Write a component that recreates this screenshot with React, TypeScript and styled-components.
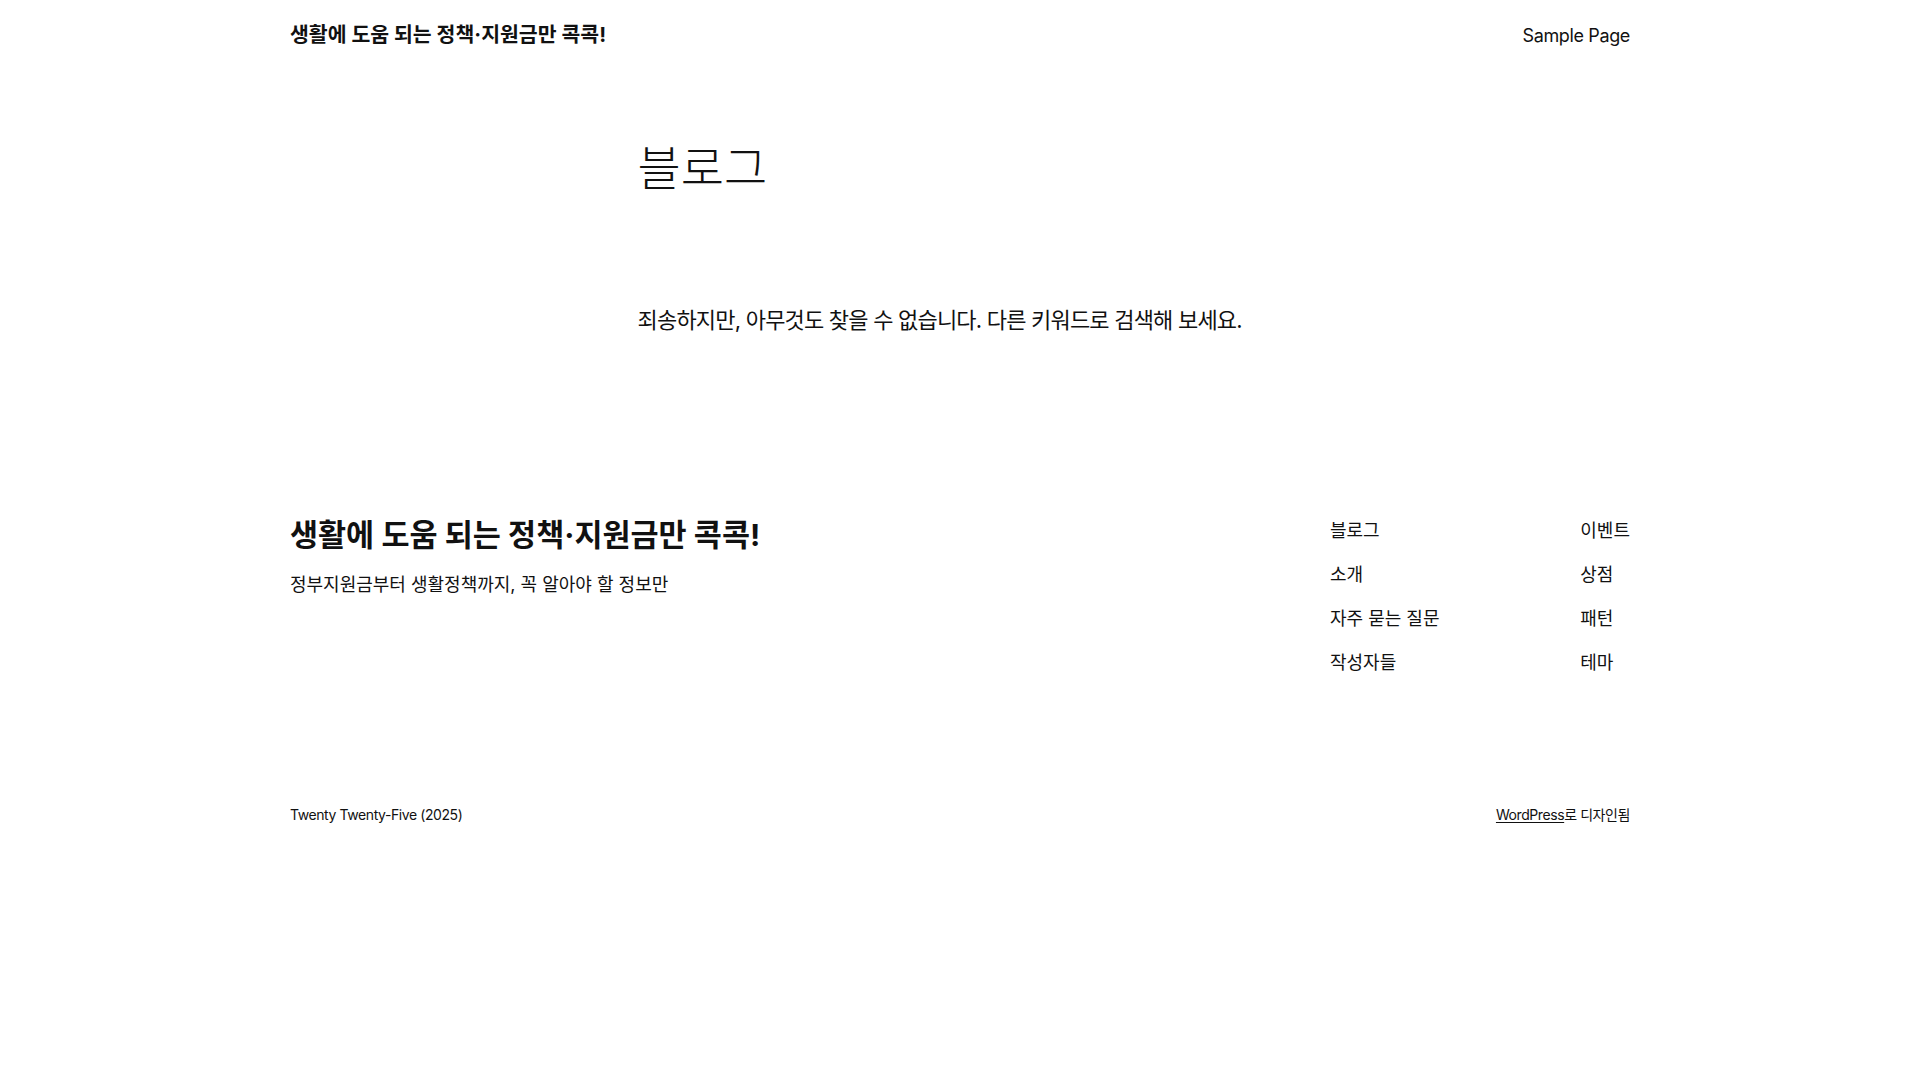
import styled, { createGlobalStyle } from "styled-components";

const GlobalStyle = createGlobalStyle`
  body {
    margin: 0;
    background: #ffffff;
    color: #111111;
    font-family: Inter, "Noto Sans CJK KR", sans-serif;
  }
  a {
    color: inherit;
    text-decoration: none;
  }
`;

const Wide = styled.div`
  width: 1340px;
  margin: 0 auto;
`;

const Header = styled.header`
  width: 1340px;
  margin: 0 auto;
  height: 70px;
  display: flex;
  justify-content: space-between;
  align-items: center;
`;

const SiteTitle = styled.a<{ $size: number }>`
  font-size: ${(p) => p.$size}px;
  font-weight: 700;
  letter-spacing: 0;
  line-height: 1.2;
`;

const MenuLink = styled.a`
  font-size: 18px;
  letter-spacing: -0.02em;
  line-height: 1.5;
`;

const Main = styled.main`
  width: 645px;
  margin: 70px auto 0;
`;

const PageTitle = styled.h1`
  margin: 0;
  font-size: 47px;
  font-weight: 300;
  letter-spacing: 0;
  line-height: 1.2;
`;

const Notice = styled.p`
  margin: 108px 0 0;
  font-size: 22px;
  letter-spacing: -0.036em;
  line-height: 1.5;
`;

const Footer = styled.footer`
  margin-top: 180px;
`;

const FooterTop = styled(Wide)`
  display: flex;
  justify-content: space-between;
  align-items: flex-start;
`;

const Brand = styled.div`
  display: flex;
  flex-direction: column;
  gap: 17px;
`;

const Tagline = styled.p`
  margin: 0;
  font-size: 18px;
  letter-spacing: 0;
  line-height: 1.5;
`;

const Nav = styled.nav`
  width: 300px;
  display: flex;
  justify-content: space-between;
`;

const NavColumn = styled.ul`
  list-style: none;
  margin: 0;
  padding: 0;
  display: flex;
  flex-direction: column;
  gap: 17px;
`;

const NavItem = styled.li`
  font-size: 18px;
  letter-spacing: 0;
  line-height: 1.5;
`;

const Credits = styled(Wide)`
  margin-top: 129px;
  display: flex;
  justify-content: space-between;
  font-size: 14px;
  line-height: 1.4;
  letter-spacing: -0.03em;
`;

const Underlined = styled.a`
  text-decoration: underline;
  text-underline-offset: 2px;
`;

const leftLinks = ["블로그", "소개", "자주 묻는 질문", "작성자들"];
const rightLinks = ["이벤트", "상점", "패턴", "테마"];

export default function App() {
  return (
    <>
      <GlobalStyle />
      <Header>
        <SiteTitle href="#" $size={20.5}>
          생활에 도움 되는 정책·지원금만 콕콕!
        </SiteTitle>
        <MenuLink href="#">Sample Page</MenuLink>
      </Header>
      <Main>
        <PageTitle>블로그</PageTitle>
        <Notice>죄송하지만, 아무것도 찾을 수 없습니다. 다른 키워드로 검색해 보세요.</Notice>
      </Main>
      <Footer>
        <FooterTop>
          <Brand>
            <SiteTitle href="#" $size={30.5}>
              생활에 도움 되는 정책·지원금만 콕콕!
            </SiteTitle>
            <Tagline>정부지원금부터 생활정책까지, 꼭 알아야 할 정보만</Tagline>
          </Brand>
          <Nav>
            <NavColumn>
              {leftLinks.map((l) => (
                <NavItem key={l}>
                  <a href="#">{l}</a>
                </NavItem>
              ))}
            </NavColumn>
            <NavColumn>
              {rightLinks.map((l) => (
                <NavItem key={l}>
                  <a href="#">{l}</a>
                </NavItem>
              ))}
            </NavColumn>
          </Nav>
        </FooterTop>
        <Credits>
          <span>Twenty Twenty-Five (2025)</span>
          <span>
            <Underlined href="#">WordPress</Underlined>로 디자인됨
          </span>
        </Credits>
      </Footer>
    </>
  );
}
